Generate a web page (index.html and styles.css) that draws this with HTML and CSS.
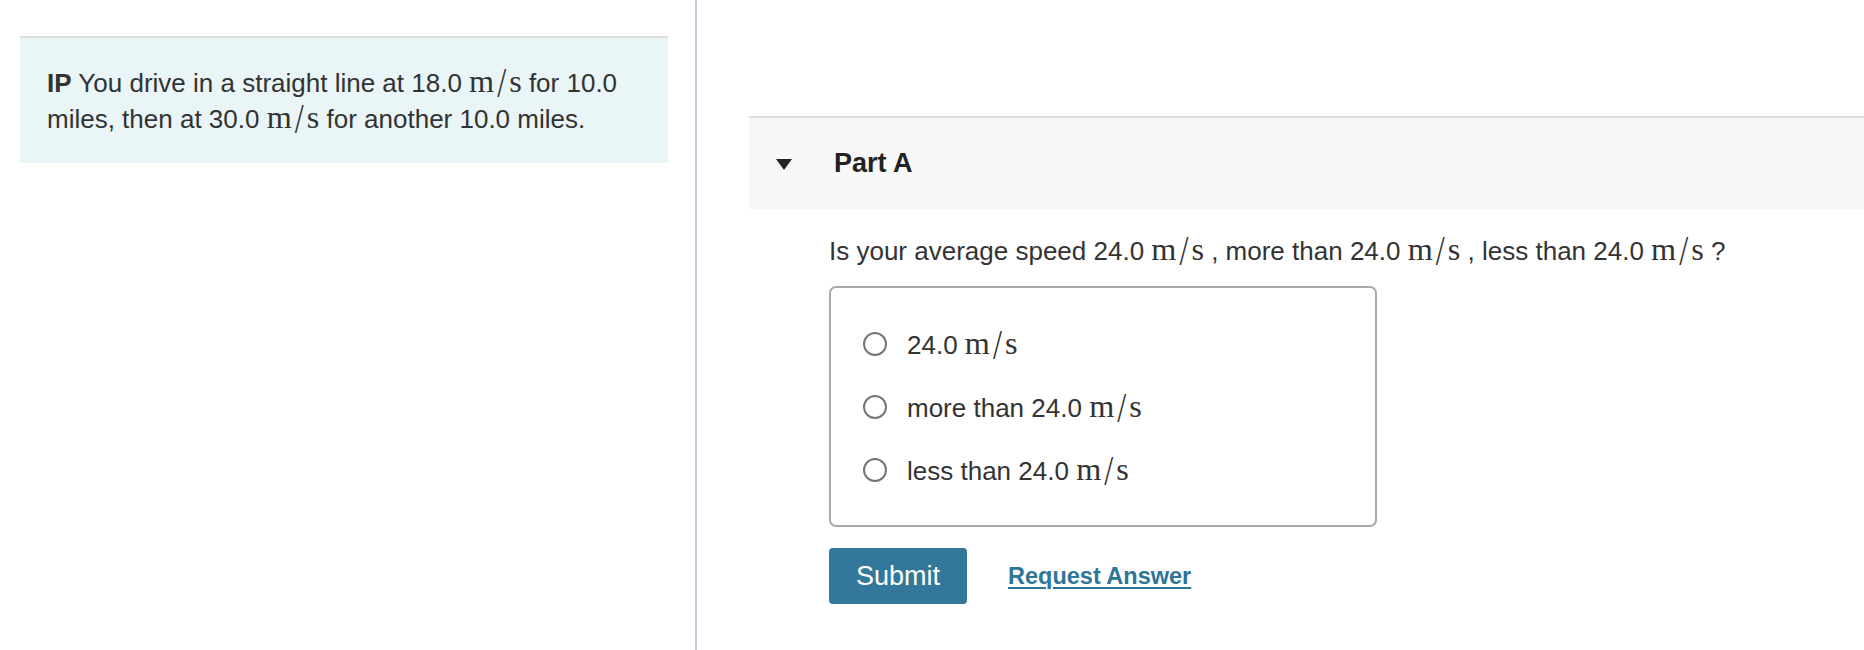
FILE: index.html
```html
<!DOCTYPE html>
<html lang="en">
<head>
    <meta charset="UTF-8">
    <title>Part A</title>
    <link rel="stylesheet" href="styles.css">
</head>
<body>
    <div class="intro-col">
        <div class="intro-box">
            <b>IP</b> You drive in a straight line at 18.0 <span class="math">m<span class="slash">/</span>s</span> for 10.0<br>
            miles, then at 30.0 <span class="math">m<span class="slash">/</span>s</span> for another 10.0 miles.
        </div>
    </div>

    <div class="divider"></div>

    <div class="part-col">
        <div class="part-header">
            <span class="caret"></span>
            <span class="part-title">Part A</span>
        </div>

        <div class="part-body">
            <div class="question">
                Is your average speed 24.0 <span class="math">m<span class="slash">/</span>s</span> , more than 24.0 <span class="math">m<span class="slash">/</span>s</span> , less than 24.0 <span class="math">m<span class="slash">/</span>s</span> ?
            </div>

            <div class="options">
                <label class="option">
                    <span class="radio"></span>
                    <span>24.0 <span class="math">m<span class="slash">/</span>s</span></span>
                </label>
                <label class="option">
                    <span class="radio"></span>
                    <span>more than 24.0 <span class="math">m<span class="slash">/</span>s</span></span>
                </label>
                <label class="option">
                    <span class="radio"></span>
                    <span>less than 24.0 <span class="math">m<span class="slash">/</span>s</span></span>
                </label>
            </div>

            <div class="actions">
                <button class="submit-btn">Submit</button>
                <a href="#" class="request-link">Request Answer</a>
            </div>
        </div>
    </div>
</body>
</html>
```

FILE: styles.css
```css
* {
    margin: 0;
    padding: 0;
    box-sizing: border-box;
}

body {
    font-family: "Liberation Sans", Arial, Helvetica, sans-serif;
    color: #333;
    background-color: #fff;
    display: flex;
    height: 650px;
    overflow: hidden;
}

.math {
    font-family: "Liberation Serif", "Times New Roman", serif;
    font-size: 1.24em;
    white-space: nowrap;
    line-height: 1;
}

.slash {
    display: inline-block;
    margin: 0 3px;
    transform: scaleY(1.3) translateY(1px);
}

/* left column */
.intro-col {
    width: 695px;
    flex-shrink: 0;
    padding: 36px 27px 0 20px;
}

.intro-box {
    background-color: #e9f5f7;
    border-top: 2px solid #dddddd;
    padding: 27px 20px 26px 27px;
    font-size: 26px;
    line-height: 36px;
}

.divider {
    width: 2px;
    flex-shrink: 0;
    background-color: #c0cbdb;
}

/* right column */
.part-col {
    flex: 1;
    padding-top: 116px;
    padding-left: 52px;
}

.part-header {
    display: flex;
    align-items: center;
    height: 93px;
    border-top: 2px solid #dddddd;
    background-color: #f8f8f8;
    padding-left: 27px;
}

.caret {
    width: 0;
    height: 0;
    border-left: 8px solid transparent;
    border-right: 8px solid transparent;
    border-top: 11px solid #222;
    margin-top: 2px;
}

.part-title {
    font-size: 27px;
    font-weight: bold;
    color: #222;
    margin-left: 42px;
}

.part-body {
    padding-left: 80px;
}

.question {
    font-size: 26px;
    margin-top: 24px;
    line-height: 30px;
}

.options {
    width: 548px;
    height: 241px;
    margin-top: 20px;
    border: 2px solid #aaaaaa;
    border-radius: 7px;
    padding: 38px 0 0 32px;
    display: flex;
    flex-direction: column;
    gap: 27px;
}

.option {
    display: flex;
    align-items: center;
    gap: 20px;
    font-size: 26px;
    height: 36px;
}

.radio {
    width: 24px;
    height: 24px;
    flex-shrink: 0;
    border: 2px solid #767676;
    border-radius: 50%;
    background-color: #fff;
}

.actions {
    display: flex;
    align-items: center;
    margin-top: 21px;
    gap: 41px;
}

.submit-btn {
    width: 138px;
    height: 56px;
    border: none;
    border-radius: 4px;
    background-color: #33789a;
    color: #fff;
    font-family: "Liberation Sans", Arial, sans-serif;
    font-size: 27px;
}

.request-link {
    color: #2e7597;
    font-weight: bold;
    font-size: 23.5px;
    text-decoration: underline;
    text-decoration-thickness: 2px;
    text-underline-offset: 3px;
}
```
